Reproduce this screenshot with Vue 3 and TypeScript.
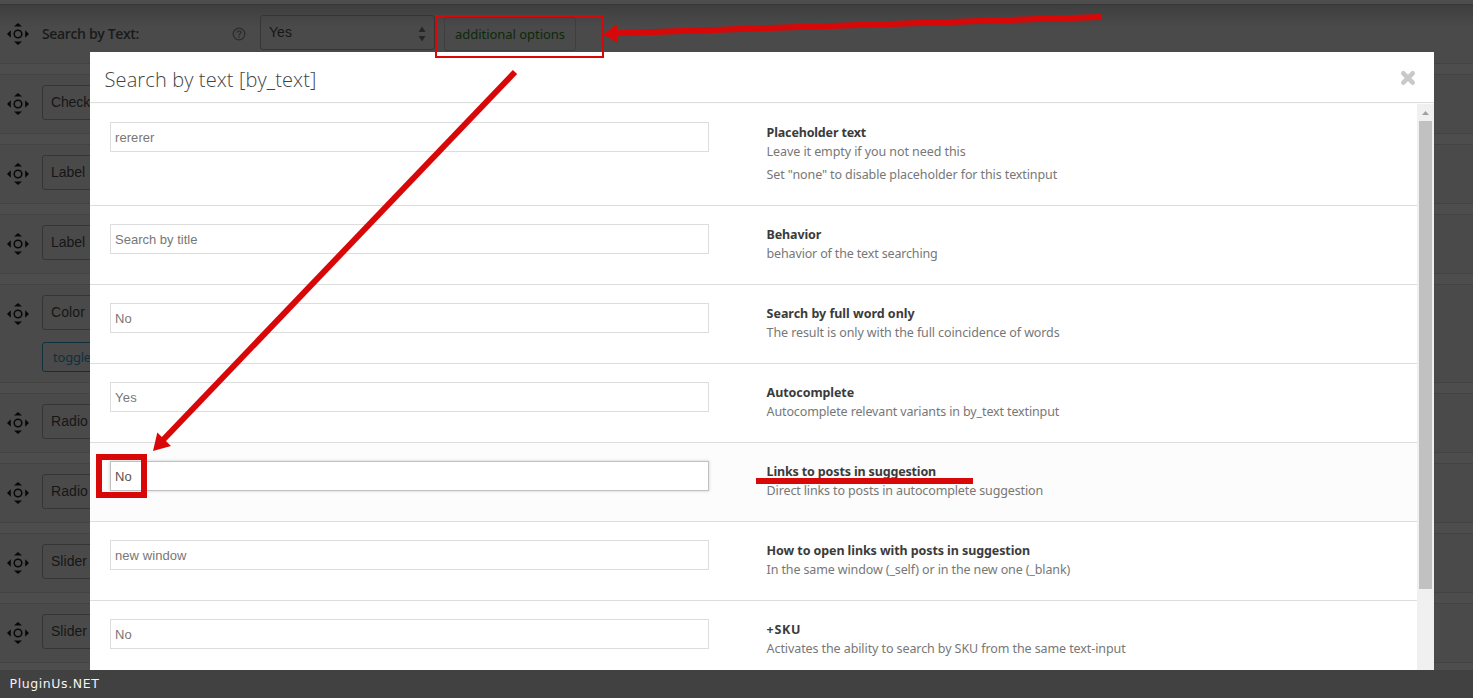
<script setup lang="ts">
import type { Directive } from 'vue'

interface Option { value: string; vw: number; title: string; tw: number; notes: { text: string; w: number }[]; tall?: boolean; active?: boolean }
interface Item { label: string; w: number; toggle?: boolean }

// Tracks a line of text so that it fills the given width.
const vFit: Directive<HTMLElement, number> = {
  mounted(el, { value }) {
    const count = (el.textContent ?? '').length
    const width = el.getBoundingClientRect().width
    if (count > 1 && value) el.style.letterSpacing = `${(value - width) / count}px`
  },
}

const items: Item[] = [
  { label: 'Check', w: 39 },
  { label: 'Label', w: 34 },
  { label: 'Label', w: 34 },
  { label: 'Color', w: 34, toggle: true },
  { label: 'Radio', w: 37 },
  { label: 'Radio', w: 37 },
  { label: 'Slider', w: 36 },
  { label: 'Slider', w: 36 },
]

const options: Option[] = [
  { value: 'rererer', vw: 39.5, title: 'Placeholder text', tw: 99.5, tall: true, notes: [
    { text: 'Leave it empty if you not need this', w: 199 },
    { text: 'Set "none" to disable placeholder for this textinput', w: 290.5 },
  ] },
  { value: 'Search by title', vw: 82.5, title: 'Behavior', tw: 54.5, notes: [{ text: 'behavior of the text searching', w: 171 }] },
  { value: 'No', vw: 17, title: 'Search by full word only', tw: 148, notes: [{ text: 'The result is only with the full coincidence of words', w: 293 }] },
  { value: 'Yes', vw: 22, title: 'Autocomplete', tw: 87.5, notes: [{ text: 'Autocomplete relevant variants in by_text textinput', w: 292.5 }] },
  { value: 'No', vw: 17, title: 'Links to posts in suggestion', tw: 169.5, active: true, notes: [{ text: 'Direct links to posts in autocomplete suggestion', w: 276.5 }] },
  { value: 'new window', vw: 71.5, title: 'How to open links with posts in suggestion', tw: 263.5, notes: [{ text: 'In the same window (_self) or in the new one (_blank)', w: 303.5 }] },
  { value: 'No', vw: 17, title: '+SKU', tw: 34.5, notes: [{ text: 'Activates the ability to search by SKU from the same text-input', w: 359 }] },
]
</script>

<template>
  <div class="page">
    <svg class="defs" width="0" height="0">
      <symbol id="move" viewBox="0 0 22 22">
        <circle cx="11" cy="11" r="3.8" fill="none" stroke="currentColor" stroke-width="1.5" />
        <path d="M11 0l4 3.6H7zM11 22l4-3.6H7zM0 11l3.8-3.8v7.6zM22 11l-3.8-3.8v7.6z" fill="currentColor" />
      </symbol>
    </svg>

    <div class="list">
      <div class="row first">
        <svg class="move"><use href="#move" /></svg>
        <div class="name"><span v-fit="97">Search by Text:</span></div>
        <svg class="help" viewBox="0 0 14 14">
          <circle cx="7" cy="7" r="5.8" fill="none" stroke="currentColor" stroke-width="1.3" />
          <path d="M5.1 5.6c0-2.3 3.8-2.3 3.8-.1C8.9 6.7 7 6.7 7 8.200M7 9.300v1.400" fill="none" stroke="currentColor" stroke-width="1.3" />
        </svg>
        <div class="select yes"><span v-fit="23">Yes</span>
          <svg class="updown" viewBox="0 0 8 16"><path d="M4 .5l3.500 5.500h-7zM4 15.500l3.500-5.500h-7z" fill="currentColor" /></svg>
        </div>
        <div class="more"><span v-fit="110">additional options</span></div>
      </div>
      <div v-for="(item, i) in items" :key="i" class="row" :class="{ big: item.toggle }">
        <svg class="move"><use href="#move" /></svg>
        <div class="fields">
          <div class="select"><span v-fit="item.w">{{ item.label }}</span></div>
          <div v-if="item.toggle" class="toggle"><span v-fit="38">toggle</span></div>
        </div>
      </div>
    </div>

    <div class="modal">
      <div class="head">
        <h3><span v-fit="212">Search by text [by_text]</span></h3>
        <svg class="close" viewBox="0 0 16 16"><path d="M3.300 3.300l9.400 9.400M12.700 3.300l-9.400 9.400" stroke="#c9c9c9" stroke-width="4.600" stroke-linecap="round" /></svg>
      </div>
      <div class="body">
        <div class="options">
          <div v-for="(o, i) in options" :key="i" class="option" :class="{ tall: o.tall, active: o.active }">
            <div class="input"><span v-fit="o.vw">{{ o.value }}</span></div>
            <div class="desc">
              <div class="line title"><span v-fit="o.tw">{{ o.title }}</span></div>
              <div v-for="n in o.notes" :key="n.text" class="line note"><span v-fit="n.w">{{ n.text }}</span></div>
            </div>
          </div>
        </div>
        <div class="scroll"><svg viewBox="0 0 17 17"><path d="M8.500 7l3.500 4H5z" fill="#a0a0a0" /></svg><div class="thumb"></div></div>
      </div>
    </div>

    <div class="footer"><span v-fit="90">PluginUs.NET</span></div>

    <svg class="marks" viewBox="0 0 1473 698">
      <g fill="none" stroke="#d80808">
        <rect x="436" y="16" width="167" height="41" stroke-width="2" />
        <path d="M1101.500 17L616 33.200" stroke-width="6" />
        <path d="M515 72L163 440" stroke-width="6" />
        <rect x="99" y="457" width="45" height="38" stroke-width="6" />
        <path d="M756 481h217" stroke-width="6" />
      </g>
      <path d="M603 34.500L617.500 24v18.800zM153 451l4.300-18.500L171 446z" fill="#d80808" />
    </svg>
  </div>
</template>

<style>
body { margin: 0; overflow: hidden; }
</style>

<style scoped>
* { box-sizing: border-box; }
.page { position: relative; width: 1473px; height: 698px; overflow: hidden; background: #4d4d4d; font-family: "Noto Sans", sans-serif; }
.page span { display: inline-block; white-space: pre; }
.defs { position: absolute; }
.list { padding-top: 4px; }
.row { display: flex; height: 60px; margin-bottom: 10px; padding: 10px 0 0 7px; background: #4a4a4a; border-top: 1px solid #434343; border-bottom: 1px solid #434343; }
.row.big { height: 99px; }
.first { background: linear-gradient(#3f3f3f, #4a4a4a 22px); border-top-color: #363636; }
.move { flex: none; width: 22px; height: 22px; margin-top: 8px; margin-right: 13px; color: #080808; }
.select { display: flex; align-items: center; width: 175px; height: 35px; padding: 0 0 1px 8px; border: 1px solid #353535; border-radius: 3px; color: #161616; font: 14px "Liberation Sans", sans-serif; }
.name { width: 190px; padding-top: 9px; color: #1a1a1a; font: 600 14px/20px "Open Sans", sans-serif; }
.help { width: 14px; height: 14px; margin-top: 12px; color: #2c2c2c; }
.select.yes { margin-left: 14px; }
.updown { width: 8px; height: 16px; margin: 4px 8px 0 auto; color: #252525; }
.more { width: 132px; height: 34px; margin: 2px 0 0 9px; padding-left: 10px; border: 1px solid #3e3e3e; border-radius: 3px; color: #0c290c; font: 13px/32px "Noto Sans", sans-serif; }
.toggle { width: 120px; height: 30px; margin-top: 12px; padding-left: 10px; border: 1px solid #112f3c; border-radius: 3px; color: #112f3c; font: 13px/28px "Noto Sans", sans-serif; }
.modal { position: absolute; left: 90px; top: 52px; width: 1344px; height: 618px; overflow: hidden; background: #fff; }
.head { display: flex; justify-content: space-between; height: 52px; padding: 0 18px 0 14.5px; border-bottom: 1px solid #fbfbfb; box-shadow: inset 0 -1px #ddd; }
h3 { margin: 0; color: #444; font: 300 20px/55px "Open Sans", sans-serif; }
.close { width: 16px; height: 16px; margin-top: 18px; }
.body { display: flex; height: 566px; }
.options { width: 1327px; }
.option { display: flex; height: 79px; padding: 18px 0 0 20px; border-bottom: 1px solid #ddd; }
.option.tall { height: 102px; }
.option.active { background: #fcfcfc; }
.input { width: 599px; height: 30px; padding-left: 4px; border: 1px solid #ddd; background: #fff; color: #777; font: 13px/29px "Liberation Sans", sans-serif; }
.active .input { border-color: #c0c0c0; box-shadow: 0 0 3px #ccc; color: #555; }
.desc { margin-left: 57.6px; padding-top: 1px; }
.line { height: 19px; font-size: 12.5px; line-height: 19px; color: #777; }
.title { color: #3b3b3b; font-weight: 700; }
.note + .note { margin-top: 4px; }
.scroll { width: 17px; background: #f0f0f0; }
.scroll svg { display: block; width: 17px; height: 17px; }
.thumb { width: 13px; height: 468px; margin: 0 auto; background: #c1c1c1; }
.footer { position: absolute; left: 0; top: 670px; width: 100%; height: 28px; padding-left: 9.5px; background: #414141; color: #f4f4f4; font: 12.5px/27px "DejaVu Sans", sans-serif; }
.marks { position: absolute; left: 0; top: 0; width: 1473px; height: 698px; }
</style>
